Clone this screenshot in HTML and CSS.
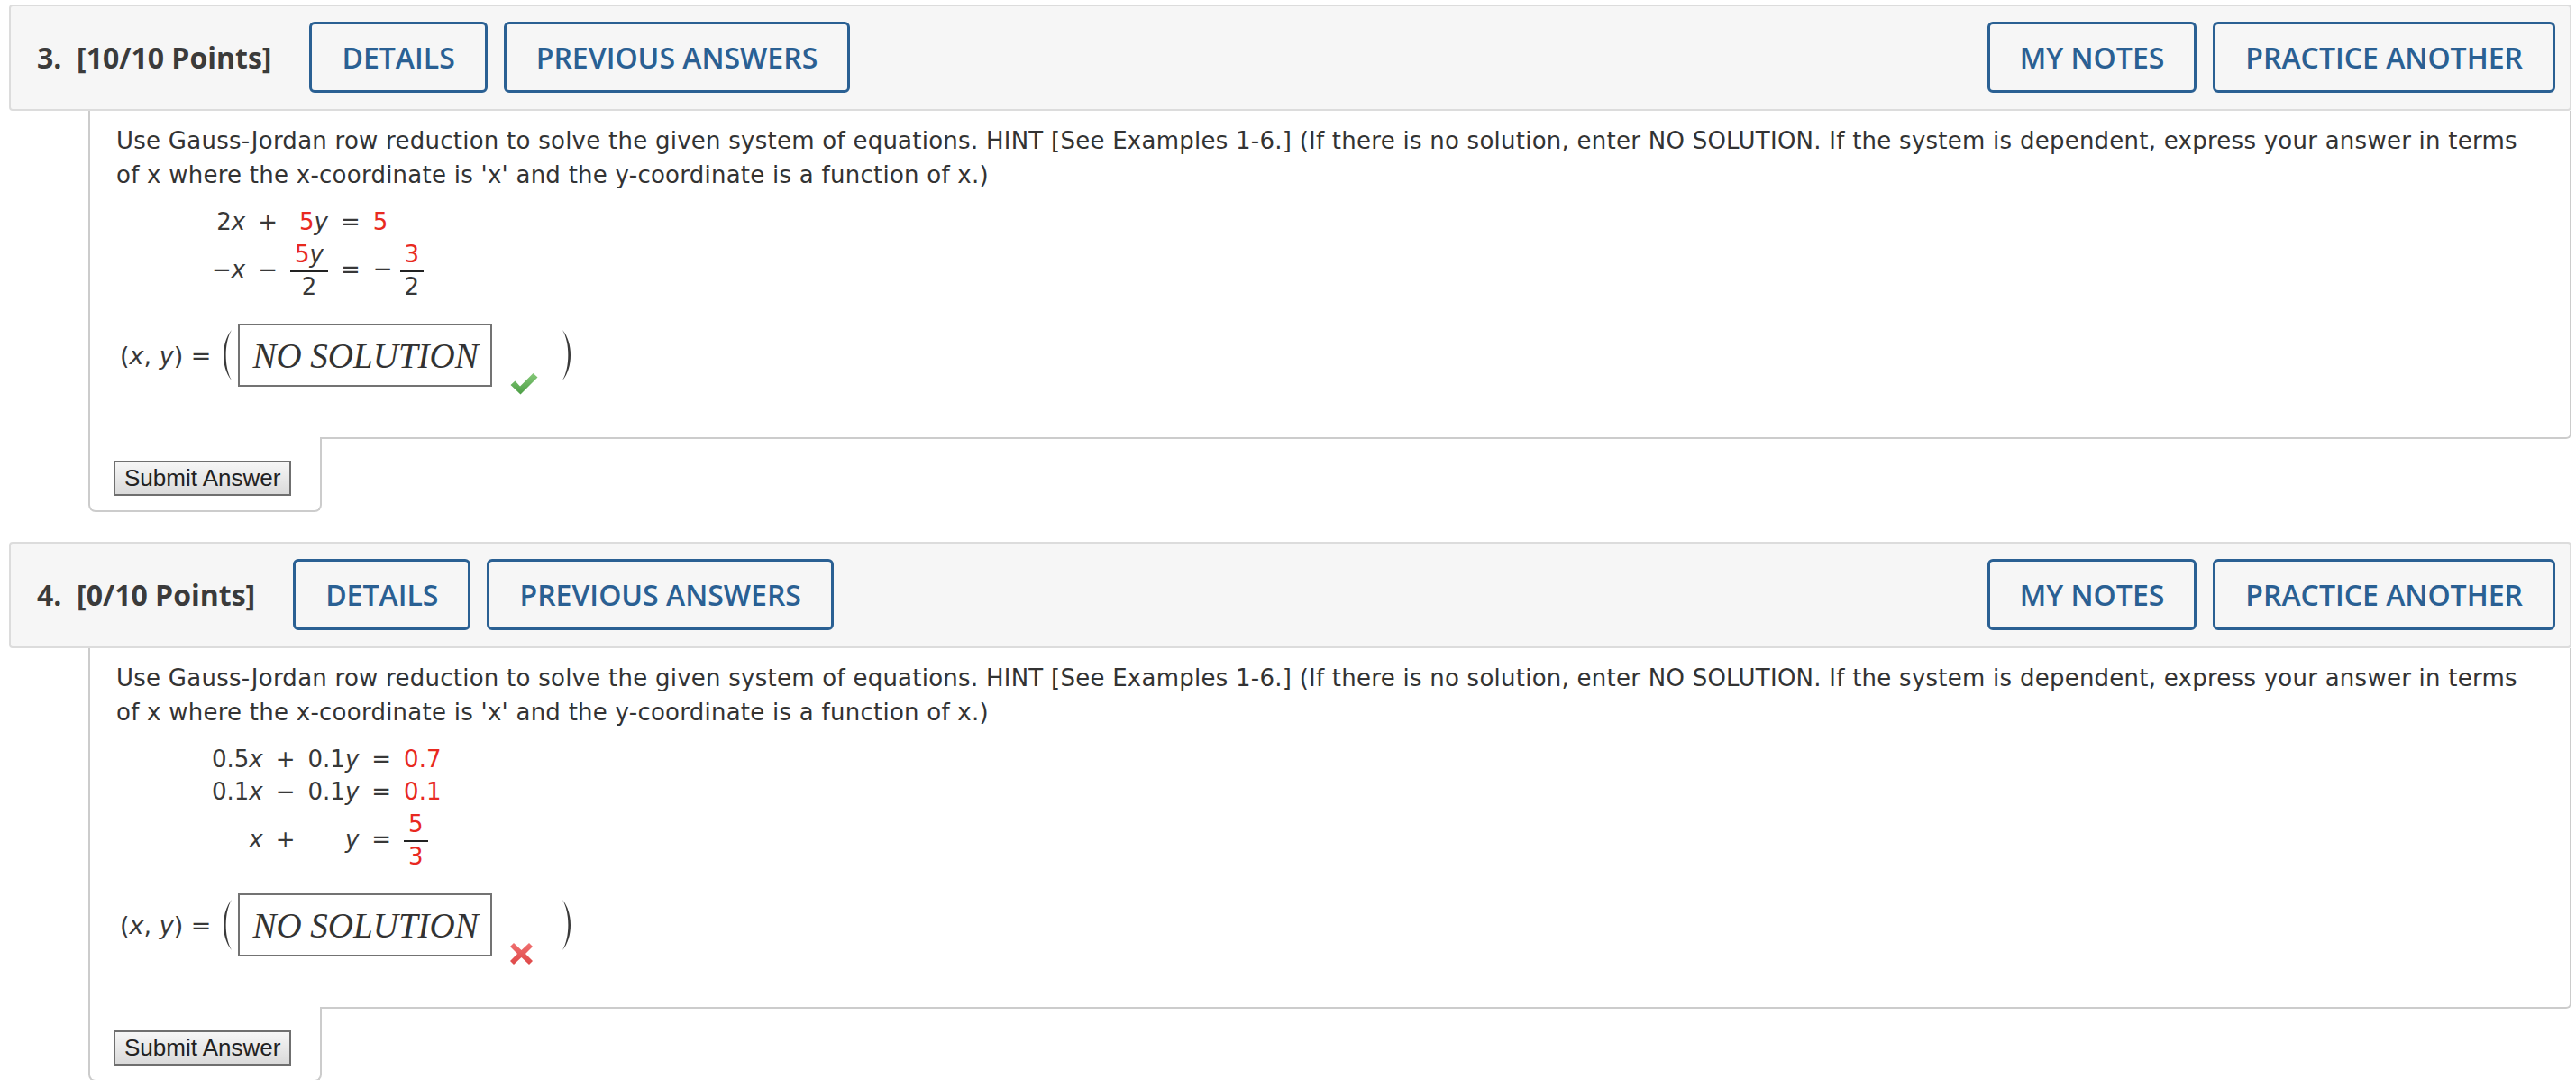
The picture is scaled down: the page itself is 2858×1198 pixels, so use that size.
FILE: index.html
```html
<!DOCTYPE html>
<html lang="en">
<head>
<meta charset="utf-8">
<title>Questions</title>
<link rel="stylesheet" href="styles.css">
</head>
<body>
<div class="page">

  <section class="question">
    <div class="qhead">
      <span class="qnum">3.&nbsp; [10/10 Points]</span>
      <div class="btns">
        <a class="hbtn">DETAILS</a>
        <a class="hbtn">PREVIOUS ANSWERS</a>
      </div>
      <div class="btns btns-right">
        <a class="hbtn">MY NOTES</a>
        <a class="hbtn">PRACTICE ANOTHER</a>
      </div>
    </div>
    <div class="qbody">
      <p class="prompt">Use Gauss-Jordan row reduction to solve the given system of equations. HINT [See Examples 1-6.] (If there is no solution, enter NO SOLUTION. If the system is dependent, express your answer in terms of x where the x-coordinate is 'x' and the y-coordinate is a function of x.)</p>
      <table class="eqs">
        <tr>
          <td class="c1">2<i>x</i></td>
          <td class="op">+</td>
          <td class="c3"><span class="red">5</span><i>y</i></td>
          <td class="op">=</td>
          <td class="c5"><span class="red">5</span></td>
        </tr>
        <tr>
          <td class="c1">−<i>x</i></td>
          <td class="op">−</td>
          <td class="c3"><span class="frac"><span class="num"><span class="red">5</span><i>y</i></span><span class="den">2</span></span></td>
          <td class="op">=</td>
          <td class="c5"><span class="neg">−</span><span class="frac"><span class="num red">3</span><span class="den">2</span></span></td>
        </tr>
      </table>
      <div class="answer">
        <span class="lhs">(<i>x</i>, <i>y</i>) =</span>
        <svg class="paren" viewBox="0 0 16 58" aria-hidden="true"><path d="M14 1 C2 15 2 43 14 57 C5.5 43 5.5 15 14 1 Z"/></svg>
        <div class="field">NO SOLUTION</div>
        <svg class="mark" viewBox="0 0 33 26" aria-hidden="true">
          <defs><linearGradient id="gcheck" x1="0" y1="0" x2="0" y2="1"><stop offset="0" stop-color="#86c979"/><stop offset="1" stop-color="#4c9e45"/></linearGradient></defs>
          <path d="M1.5 14 L6.5 9.5 L12 15.5 L26.5 1 L31.5 5.5 L12.5 24.5 Z" fill="url(#gcheck)"/>
        </svg>
        <svg class="paren" viewBox="0 0 16 58" aria-hidden="true"><path d="M2 1 C14 15 14 43 2 57 C10.5 43 10.5 15 2 1 Z"/></svg>
      </div>
    </div>
    <div class="submit-tab"><button class="submit" type="button">Submit Answer</button></div>
  </section>

  <section class="question">
    <div class="qhead">
      <span class="qnum">4.&nbsp; [0/10 Points]</span>
      <div class="btns">
        <a class="hbtn">DETAILS</a>
        <a class="hbtn">PREVIOUS ANSWERS</a>
      </div>
      <div class="btns btns-right">
        <a class="hbtn">MY NOTES</a>
        <a class="hbtn">PRACTICE ANOTHER</a>
      </div>
    </div>
    <div class="qbody">
      <p class="prompt">Use Gauss-Jordan row reduction to solve the given system of equations. HINT [See Examples 1-6.] (If there is no solution, enter NO SOLUTION. If the system is dependent, express your answer in terms of x where the x-coordinate is 'x' and the y-coordinate is a function of x.)</p>
      <table class="eqs">
        <tr>
          <td class="c1">0.5<i>x</i></td>
          <td class="op">+</td>
          <td class="c3">0.1<i>y</i></td>
          <td class="op">=</td>
          <td class="c5"><span class="red">0.7</span></td>
        </tr>
        <tr>
          <td class="c1">0.1<i>x</i></td>
          <td class="op">−</td>
          <td class="c3">0.1<i>y</i></td>
          <td class="op">=</td>
          <td class="c5"><span class="red">0.1</span></td>
        </tr>
        <tr>
          <td class="c1"><i>x</i></td>
          <td class="op">+</td>
          <td class="c3"><i>y</i></td>
          <td class="op">=</td>
          <td class="c5"><span class="frac"><span class="num red">5</span><span class="den red">3</span></span></td>
        </tr>
      </table>
      <div class="answer">
        <span class="lhs">(<i>x</i>, <i>y</i>) =</span>
        <svg class="paren" viewBox="0 0 16 58" aria-hidden="true"><path d="M14 1 C2 15 2 43 14 57 C5.5 43 5.5 15 14 1 Z"/></svg>
        <div class="field">NO SOLUTION</div>
        <svg class="mark mark-x" viewBox="0 0 27 26" aria-hidden="true">
          <defs><linearGradient id="gcross" x1="0" y1="0" x2="0" y2="1"><stop offset="0" stop-color="#f07070"/><stop offset="1" stop-color="#de4848"/></linearGradient></defs>
          <path d="M1 5 L5 1 L13.5 9 L22 1 L26 5 L18 13 L26 21 L22 25 L13.5 17 L5 25 L1 21 L9 13 Z" fill="url(#gcross)"/>
        </svg>
        <svg class="paren" viewBox="0 0 16 58" aria-hidden="true"><path d="M2 1 C14 15 14 43 2 57 C10.5 43 10.5 15 2 1 Z"/></svg>
      </div>
    </div>
    <div class="submit-tab"><button class="submit" type="button">Submit Answer</button></div>
  </section>

</div>
</body>
</html>
```

FILE: styles.css
```css
html, body {
  margin: 0;
  padding: 0;
  background: #ffffff;
  overflow: hidden;
}

.page {
  padding: 5px 5px 0 10px;
}

.question {
  margin-bottom: 33px;
}

/* header bar */
.qhead {
  display: flex;
  align-items: center;
  background: #f6f6f6;
  border: 2px solid #dcdcdc;
  border-radius: 4px;
  padding: 17px 16px 18px 29px;
}

.qnum {
  font-family: "Open Sans", sans-serif;
  font-weight: 700;
  font-size: 32px;
  color: #3b3b3b;
  margin-right: 42px;
  white-space: pre;
}

.btns {
  display: flex;
  gap: 18px;
}

.btns-right {
  margin-left: auto;
}

.hbtn {
  display: flex;
  align-items: center;
  height: 79px;
  box-sizing: border-box;
  padding: 0 33px;
  border: 3px solid #2a6093;
  border-radius: 6px;
  color: #2a6093;
  font-family: "Open Sans", sans-serif;
  font-weight: 600;
  font-size: 32px;
  letter-spacing: 0;
}

/* question body */
.qbody {
  margin-left: 88px;
  border-left: 2px solid #cccccc;
  border-right: 2px solid #cccccc;
  border-bottom: 2px solid #cccccc;
  border-bottom-right-radius: 6px;
  padding: 14px 40px 56px 29px;
  font-family: "DejaVu Sans", Verdana, sans-serif;
  color: #333333;
}

.prompt {
  margin: 0;
  font-size: 26px;
  letter-spacing: 0.25px;
  line-height: 38px;
}

.eqs {
  margin: 15px 0 0 106px;
  border-collapse: collapse;
  font-size: 26px;
  color: #383838;
}

.eqs td {
  padding: 0 7px;
  line-height: 36px;
  vertical-align: middle;
  white-space: nowrap;
}

.eqs td.c1 {
  text-align: right;
  padding-left: 0;
}

.eqs td.c3 {
  text-align: right;
}

.eqs td.op {
  text-align: center;
}

.eqs td.c5 {
  text-align: left;
}

.eqs i,
.lhs i {
  font-style: italic;
}

.red {
  color: #e8291f;
}

.neg {
  margin-right: 8px;
}

.frac {
  display: inline-flex;
  flex-direction: column;
  align-items: stretch;
  vertical-align: middle;
  text-align: center;
}

.frac .num {
  line-height: 36px;
  padding: 0 5px;
}

.frac .den {
  line-height: 32px;
  border-top: 2px solid #222222;
  padding: 0 5px;
}

/* answer row */
.answer {
  display: flex;
  align-items: center;
  margin-top: 25px;
  padding-left: 4px;
}

.lhs {
  font-size: 27px;
  color: #383838;
  margin-right: 9px;
}

.paren {
  width: 16px;
  height: 58px;
  fill: #3a3a3a;
}

.field {
  margin-left: 5px;
  width: 282px;
  height: 70px;
  box-sizing: border-box;
  border: 2px solid #737373;
  background: #ffffff;
  display: flex;
  align-items: center;
  padding-left: 14px;
  font-family: "Liberation Serif", "Times New Roman", serif;
  font-style: italic;
  font-size: 39px;
  color: #333333;
  white-space: nowrap;
}

.mark {
  width: 33px;
  height: 26px;
  margin-left: 19px;
  margin-right: 24px;
  align-self: flex-end;
  margin-bottom: -10px;
}

.mark-x {
  width: 27px;
  margin-right: 30px;
}

/* submit tab */
.submit-tab {
  margin-left: 88px;
  margin-top: -2px;
  width: 259px;
  box-sizing: border-box;
  background: #ffffff;
  border: 2px solid #cccccc;
  border-top: none;
  border-radius: 0 0 8px 8px;
  padding: 26px 0 16px 26px;
}

.submit {
  display: block;
  height: 39px;
  padding: 0 10px;
  border: 2px solid #6f6f6f;
  border-radius: 0;
  background: linear-gradient(#f6f6f6, #dadada);
  font-family: "Liberation Sans", Arial, sans-serif;
  font-size: 26px;
  color: #222222;
  line-height: 33px;
}
```
